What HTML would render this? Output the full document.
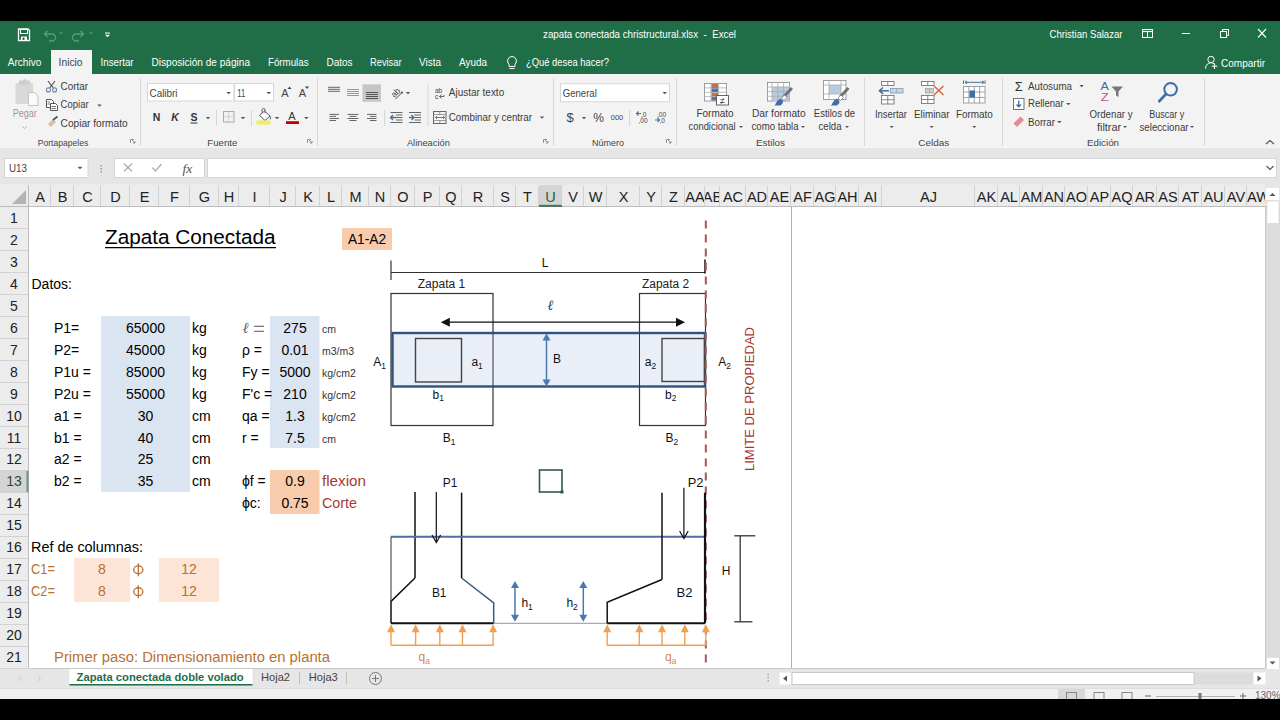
<!DOCTYPE html>
<html><head><meta charset="utf-8"><style>html,body{margin:0;padding:0;background:#000;overflow:hidden;width:1280px;height:720px}svg{display:block}text{font-family:"Liberation Sans",sans-serif}</style></head><body>
<svg width="1280" height="720" viewBox="0 0 1280 720" font-family='"Liberation Sans", sans-serif'><defs><clipPath id="c0"><rect x="29" y="185" width="21" height="21"/></clipPath><clipPath id="c1"><rect x="51" y="185" width="22" height="21"/></clipPath><clipPath id="c2"><rect x="74" y="185" width="26" height="21"/></clipPath><clipPath id="c3"><rect x="101" y="185" width="28" height="21"/></clipPath><clipPath id="c4"><rect x="130" y="185" width="28" height="21"/></clipPath><clipPath id="c5"><rect x="159" y="185" width="30" height="21"/></clipPath><clipPath id="c6"><rect x="190" y="185" width="28" height="21"/></clipPath><clipPath id="c7"><rect x="219" y="185" width="19" height="21"/></clipPath><clipPath id="c8"><rect x="239" y="185" width="30" height="21"/></clipPath><clipPath id="c9"><rect x="270" y="185" width="25" height="21"/></clipPath><clipPath id="c10"><rect x="296" y="185" width="23" height="21"/></clipPath><clipPath id="c11"><rect x="320" y="185" width="21" height="21"/></clipPath><clipPath id="c12"><rect x="342" y="185" width="26" height="21"/></clipPath><clipPath id="c13"><rect x="369" y="185" width="21" height="21"/></clipPath><clipPath id="c14"><rect x="391" y="185" width="23" height="21"/></clipPath><clipPath id="c15"><rect x="415" y="185" width="24" height="21"/></clipPath><clipPath id="c16"><rect x="440" y="185" width="21" height="21"/></clipPath><clipPath id="c17"><rect x="462" y="185" width="31" height="21"/></clipPath><clipPath id="c18"><rect x="494" y="185" width="21" height="21"/></clipPath><clipPath id="c19"><rect x="516" y="185" width="22" height="21"/></clipPath><clipPath id="c20"><rect x="539" y="185" width="22" height="21"/></clipPath><clipPath id="c21"><rect x="562" y="185" width="21" height="21"/></clipPath><clipPath id="c22"><rect x="584" y="185" width="22" height="21"/></clipPath><clipPath id="c23"><rect x="607" y="185" width="32" height="21"/></clipPath><clipPath id="c24"><rect x="640" y="185" width="21" height="21"/></clipPath><clipPath id="c25"><rect x="662" y="185" width="22" height="21"/></clipPath><clipPath id="c26"><rect x="685" y="185" width="19" height="21"/></clipPath><clipPath id="c27"><rect x="705" y="185" width="14" height="21"/></clipPath><clipPath id="c28"><rect x="720" y="185" width="25" height="21"/></clipPath><clipPath id="c29"><rect x="746" y="185" width="21" height="21"/></clipPath><clipPath id="c30"><rect x="768" y="185" width="22" height="21"/></clipPath><clipPath id="c31"><rect x="791" y="185" width="22" height="21"/></clipPath><clipPath id="c32"><rect x="814" y="185" width="21" height="21"/></clipPath><clipPath id="c33"><rect x="836" y="185" width="22" height="21"/></clipPath><clipPath id="c34"><rect x="859" y="185" width="22" height="21"/></clipPath><clipPath id="c35"><rect x="882" y="185" width="92" height="21"/></clipPath><clipPath id="c36"><rect x="975" y="185" width="22" height="21"/></clipPath><clipPath id="c37"><rect x="998" y="185" width="21" height="21"/></clipPath><clipPath id="c38"><rect x="1020" y="185" width="22" height="21"/></clipPath><clipPath id="c39"><rect x="1043" y="185" width="21" height="21"/></clipPath><clipPath id="c40"><rect x="1065" y="185" width="22" height="21"/></clipPath><clipPath id="c41"><rect x="1088" y="185" width="22" height="21"/></clipPath><clipPath id="c42"><rect x="1111" y="185" width="21" height="21"/></clipPath><clipPath id="c43"><rect x="1133" y="185" width="23" height="21"/></clipPath><clipPath id="c44"><rect x="1157" y="185" width="21" height="21"/></clipPath><clipPath id="c45"><rect x="1179" y="185" width="22" height="21"/></clipPath><clipPath id="c46"><rect x="1202" y="185" width="22" height="21"/></clipPath><clipPath id="c47"><rect x="1225" y="185" width="21" height="21"/></clipPath><clipPath id="c48"><rect x="1247" y="185" width="22" height="21"/></clipPath></defs>
<rect x="0" y="0" width="1280" height="720" fill="#000" />
<rect x="0" y="21" width="1280" height="53" fill="#1f6e47" />
<text x="543" y="38" font-size="11" fill="#fff" text-anchor="start" font-weight="normal" textLength="193" lengthAdjust="spacingAndGlyphs" >zapata conectada christructural.xlsx  -  Excel</text>
<text x="1049.5" y="38" font-size="11" fill="#fff" text-anchor="start" font-weight="normal" textLength="73" lengthAdjust="spacingAndGlyphs" >Christian Salazar</text>
<path d="M18.5,29 h9.5 l1.5,1.5 v10 h-11 Z" fill="none" stroke="#fff" stroke-width="1.3" />
<rect x="20.5" y="29.5" width="7" height="4" fill="none" stroke="#fff" stroke-width="1" />
<rect x="21" y="36.5" width="6" height="4" fill="#fff" />
<rect x="22.5" y="37.5" width="2" height="2.5" fill="#1f6e47" />
<path d="M45,34 h7 a3.5,3.5 0 0 1 0,7 h-3" fill="none" stroke="#5f9a78" stroke-width="1.3" />
<path d="M47.5,31 L44.5,34 L47.5,37" fill="none" stroke="#5f9a78" stroke-width="1.3" />
<path d="M59.0,32.5 L63.0,32.5 L61,34.5 Z" fill="#5f9a78" />
<path d="M83,34 h-7 a3.5,3.5 0 0 0 0,7 h3" fill="none" stroke="#5f9a78" stroke-width="1.3" />
<path d="M80.5,31 L83.5,34 L80.5,37" fill="none" stroke="#5f9a78" stroke-width="1.3" />
<path d="M89.0,32.5 L93.0,32.5 L91,34.5 Z" fill="#5f9a78" />
<line x1="105" y1="33" x2="110" y2="33" stroke="#fff" stroke-width="1" />
<path d="M105.0,34.75 L110.0,34.75 L107.5,37.25 Z" fill="#fff" />
<rect x="1142.5" y="29.5" width="10" height="8" fill="none" stroke="#fff" stroke-width="1" />
<line x1="1142.5" y1="31.5" x2="1152.5" y2="31.5" stroke="#fff" stroke-width="1.2" />
<line x1="1147.5" y1="32" x2="1147.5" y2="37.5" stroke="#fff" stroke-width="1" />
<line x1="1182" y1="33.5" x2="1190" y2="33.5" stroke="#fff" stroke-width="1" />
<rect x="1220.5" y="31.5" width="6" height="6" fill="none" stroke="#fff" stroke-width="1" />
<path d="M1222.5,31.5 v-2 h6 v6 h-2" fill="none" stroke="#fff" stroke-width="1" />
<line x1="1258" y1="29" x2="1266" y2="37.5" stroke="#fff" stroke-width="1.1" />
<line x1="1266" y1="29" x2="1258" y2="37.5" stroke="#fff" stroke-width="1.1" />
<rect x="51" y="50" width="41" height="24" fill="#f3f3f3" />
<text x="7.75" y="66" font-size="11" fill="#fff" text-anchor="start" font-weight="normal" textLength="33.5" lengthAdjust="spacingAndGlyphs" >Archivo</text>
<text x="58.6" y="66" font-size="11" fill="#444" text-anchor="start" font-weight="normal" textLength="24" lengthAdjust="spacingAndGlyphs" >Inicio</text>
<text x="100.6" y="66" font-size="11" fill="#fff" text-anchor="start" font-weight="normal" textLength="33" lengthAdjust="spacingAndGlyphs" >Insertar</text>
<text x="151.5" y="66" font-size="11" fill="#fff" text-anchor="start" font-weight="normal" textLength="98.5" lengthAdjust="spacingAndGlyphs" >Disposición de página</text>
<text x="268" y="66" font-size="11" fill="#fff" text-anchor="start" font-weight="normal" textLength="40.5" lengthAdjust="spacingAndGlyphs" >Fórmulas</text>
<text x="326.5" y="66" font-size="11" fill="#fff" text-anchor="start" font-weight="normal" textLength="26" lengthAdjust="spacingAndGlyphs" >Datos</text>
<text x="370" y="66" font-size="11" fill="#fff" text-anchor="start" font-weight="normal" textLength="31.5" lengthAdjust="spacingAndGlyphs" >Revisar</text>
<text x="419" y="66" font-size="11" fill="#fff" text-anchor="start" font-weight="normal" textLength="22" lengthAdjust="spacingAndGlyphs" >Vista</text>
<text x="459" y="66" font-size="11" fill="#fff" text-anchor="start" font-weight="normal" textLength="28" lengthAdjust="spacingAndGlyphs" >Ayuda</text>
<text x="526" y="66" font-size="11" fill="#fff" text-anchor="start" font-weight="normal" textLength="83" lengthAdjust="spacingAndGlyphs" >¿Qué desea hacer?</text>
<path d="M512,56.5 a4.5,4.5 0 0 1 3,7.8 v2.2 h-6 v-2.2 a4.5,4.5 0 0 1 3,-7.8 Z" fill="none" stroke="#fff" stroke-width="1" />
<line x1="509.5" y1="68.5" x2="514.5" y2="68.5" stroke="#fff" stroke-width="1" />
<circle cx="1211" cy="59.5" r="3.2" fill="none" stroke="#fff" stroke-width="1"/>
<path d="M1205.5,68.5 a5.5,5.5 0 0 1 9,-4.5" fill="none" stroke="#fff" stroke-width="1" />
<line x1="1214.5" y1="63.5" x2="1214.5" y2="69" stroke="#fff" stroke-width="1.1" />
<line x1="1211.8" y1="66.2" x2="1217.2" y2="66.2" stroke="#fff" stroke-width="1.1" />
<text x="1221" y="67" font-size="11" fill="#fff" text-anchor="start" font-weight="normal" textLength="44" lengthAdjust="spacingAndGlyphs" >Compartir</text>
<rect x="0" y="148" width="1280" height="37" fill="#e6e6e6" />
<rect x="4.5" y="158.5" width="83.5" height="19" fill="#fff" stroke="#d6d6d6" stroke-width="1" />
<text x="9" y="172" font-size="11" fill="#444" text-anchor="start" font-weight="normal" textLength="18" lengthAdjust="spacingAndGlyphs" >U13</text>
<path d="M77.5,166.75 L82.5,166.75 L80,169.25 Z" fill="#555" />
<rect x="100.5" y="165" width="1.5" height="1.5" fill="#999" />
<rect x="100.5" y="168" width="1.5" height="1.5" fill="#999" />
<rect x="100.5" y="171" width="1.5" height="1.5" fill="#999" />
<rect x="114.5" y="158.5" width="90" height="19" fill="#fff" stroke="#d6d6d6" stroke-width="1" />
<line x1="124" y1="163.5" x2="132" y2="171.5" stroke="#aaa" stroke-width="1.1" />
<line x1="132" y1="163.5" x2="124" y2="171.5" stroke="#aaa" stroke-width="1.1" />
<path d="M152.5,167.5 l3,3.5 l6,-7" fill="none" stroke="#aaa" stroke-width="1.2" />
<text x="182.5" y="172.5" font-size="13.5" fill="#555" text-anchor="start" font-weight="normal" font-style="italic" style="font-family:Liberation Serif">fx</text>
<rect x="207.5" y="158.5" width="1069" height="19" fill="#fff" stroke="#d6d6d6" stroke-width="1" />
<path d="M1266.5,166 l3.5,3.5 l3.5,-3.5" fill="none" stroke="#555" stroke-width="1.2" />
<rect x="0" y="668" width="1280" height="20" fill="#e6e6e6" />
<path d="M21.5,676 l-2.5,2.5 l2.5,2.5" fill="none" stroke="#c4c4c4" stroke-width="1" />
<path d="M38,676 l2.5,2.5 l-2.5,2.5" fill="none" stroke="#c4c4c4" stroke-width="1" />
<rect x="69.5" y="668" width="183" height="18" fill="#fff" />
<rect x="69.5" y="684" width="183" height="1.6" fill="#1f6e47" />
<text x="160.1" y="681" font-size="11" fill="#1f6e47" text-anchor="middle" font-weight="bold" textLength="167" lengthAdjust="spacingAndGlyphs" >Zapata conectada doble volado</text>
<text x="261" y="681" font-size="11" fill="#444" text-anchor="start" font-weight="normal" textLength="29" lengthAdjust="spacingAndGlyphs" >Hoja2</text>
<text x="308.75" y="681" font-size="11" fill="#444" text-anchor="start" font-weight="normal" textLength="29" lengthAdjust="spacingAndGlyphs" >Hoja3</text>
<line x1="299.5" y1="672" x2="299.5" y2="684" stroke="#c0c0c0" stroke-width="1" />
<line x1="346.5" y1="672" x2="346.5" y2="684" stroke="#c0c0c0" stroke-width="1" />
<circle cx="375.5" cy="678.5" r="6" fill="none" stroke="#777" stroke-width="1"/>
<line x1="372" y1="678.5" x2="379" y2="678.5" stroke="#777" stroke-width="1" />
<line x1="375.5" y1="675" x2="375.5" y2="682" stroke="#777" stroke-width="1" />
<rect x="767.5" y="674" width="1.5" height="1.5" fill="#aaa" />
<rect x="767.5" y="677" width="1.5" height="1.5" fill="#aaa" />
<rect x="767.5" y="680" width="1.5" height="1.5" fill="#aaa" />
<rect x="779.5" y="672.5" width="486" height="12" fill="#dcdcdc" />
<rect x="779.5" y="672.5" width="12" height="12" fill="#fff" />
<path d="M787,675.5 l-4,3 l4,3 Z" fill="#555" />
<rect x="792" y="672.5" width="402" height="12" fill="#fff" stroke="#c8c8c8" stroke-width="1" />
<rect x="1253.5" y="672.5" width="12" height="12" fill="#fff" />
<path d="M1257.5,675.5 l4,3 l-4,3 Z" fill="#555" />
<rect x="0" y="688" width="1280" height="11" fill="#f0f0f0" />
<line x1="0" y1="688.5" x2="1280" y2="688.5" stroke="#dedede" stroke-width="1" />
<rect x="1058" y="689" width="27" height="10" fill="#d8d8d8" />
<rect x="1066.5" y="692.5" width="10" height="7" fill="none" stroke="#888" stroke-width="1" />
<rect x="1094" y="692.5" width="10" height="7" fill="none" stroke="#888" stroke-width="1" />
<rect x="1122" y="692.5" width="10" height="7" fill="none" stroke="#888" stroke-width="1" />
<line x1="1145" y1="696" x2="1151" y2="696" stroke="#666" stroke-width="1" />
<line x1="1156" y1="696.5" x2="1235" y2="696.5" stroke="#b0b0b0" stroke-width="1" />
<rect x="1198.5" y="693" width="3" height="6" fill="#777" />
<line x1="1240" y1="696" x2="1246" y2="696" stroke="#666" stroke-width="1" />
<line x1="1243" y1="693" x2="1243" y2="699" stroke="#666" stroke-width="1" />
<text x="1255" y="699" font-size="10" fill="#666" text-anchor="start" font-weight="normal" >130%</text>
<rect x="0" y="699" width="1280" height="21" fill="#000" />
<rect x="0" y="74" width="1280" height="74" fill="#f3f3f3" />
<line x1="140.5" y1="78" x2="140.5" y2="146" stroke="#d8d8d8" stroke-width="1" />
<line x1="317.5" y1="78" x2="317.5" y2="146" stroke="#d8d8d8" stroke-width="1" />
<line x1="553.5" y1="78" x2="553.5" y2="146" stroke="#d8d8d8" stroke-width="1" />
<line x1="676.5" y1="78" x2="676.5" y2="146" stroke="#d8d8d8" stroke-width="1" />
<line x1="864.5" y1="78" x2="864.5" y2="146" stroke="#d8d8d8" stroke-width="1" />
<line x1="1002.5" y1="78" x2="1002.5" y2="146" stroke="#d8d8d8" stroke-width="1" />
<line x1="1204.5" y1="78" x2="1204.5" y2="146" stroke="#d8d8d8" stroke-width="1" />
<text x="63" y="146" font-size="9.5" fill="#444" text-anchor="middle" font-weight="normal" textLength="50.5" lengthAdjust="spacingAndGlyphs" >Portapapeles</text>
<text x="222.3" y="146" font-size="9.5" fill="#444" text-anchor="middle" font-weight="normal" textLength="30" lengthAdjust="spacingAndGlyphs" >Fuente</text>
<text x="428.4" y="146" font-size="9.5" fill="#444" text-anchor="middle" font-weight="normal" textLength="43" lengthAdjust="spacingAndGlyphs" >Alineación</text>
<text x="608" y="146" font-size="9.5" fill="#444" text-anchor="middle" font-weight="normal" textLength="32" lengthAdjust="spacingAndGlyphs" >Número</text>
<text x="770.5" y="146" font-size="9.5" fill="#444" text-anchor="middle" font-weight="normal" textLength="29" lengthAdjust="spacingAndGlyphs" >Estilos</text>
<text x="933.8" y="146" font-size="9.5" fill="#444" text-anchor="middle" font-weight="normal" textLength="31" lengthAdjust="spacingAndGlyphs" >Celdas</text>
<text x="1103" y="146" font-size="9.5" fill="#444" text-anchor="middle" font-weight="normal" textLength="32" lengthAdjust="spacingAndGlyphs" >Edición</text>
<path d="M130.5,143 v-3.5 h3.5" fill="none" stroke="#888" stroke-width="0.9" />
<path d="M132,140 l3,3 m-2,0 h2 v-2" fill="none" stroke="#888" stroke-width="0.9" />
<path d="M307.5,143 v-3.5 h3.5" fill="none" stroke="#888" stroke-width="0.9" />
<path d="M309,140 l3,3 m-2,0 h2 v-2" fill="none" stroke="#888" stroke-width="0.9" />
<path d="M543.5,143 v-3.5 h3.5" fill="none" stroke="#888" stroke-width="0.9" />
<path d="M545,140 l3,3 m-2,0 h2 v-2" fill="none" stroke="#888" stroke-width="0.9" />
<path d="M666.5,143 v-3.5 h3.5" fill="none" stroke="#888" stroke-width="0.9" />
<path d="M668,140 l3,3 m-2,0 h2 v-2" fill="none" stroke="#888" stroke-width="0.9" />
<path d="M1266,144 l4,-3.5 l4,3.5" fill="none" stroke="#555" stroke-width="1.2" />
<rect x="15.5" y="83" width="17.5" height="21" fill="#d9d9d9" />
<rect x="19" y="80.5" width="11" height="4.5" fill="#cfcfcf" />
<circle cx="24.5" cy="80.8" r="1.8" fill="#cfcfcf"/>
<path d="M28.5,92.5 h6 l3.5,3.5 v9.5 h-9.5 Z" fill="#fafafa" stroke="#c4c4c4" stroke-width="1" />
<text x="12.7" y="117" font-size="10" fill="#9a9a9a" text-anchor="start" font-weight="normal" textLength="24" lengthAdjust="spacingAndGlyphs" >Pegar</text>
<path d="M22.5,126.5 l2,2 l2,-2" fill="none" stroke="#aaa" stroke-width="0.9" />
<line x1="48" y1="81" x2="53.3" y2="87.8" stroke="#555" stroke-width="1.1" />
<line x1="55" y1="81" x2="49.7" y2="87.8" stroke="#555" stroke-width="1.1" />
<circle cx="48.4" cy="89.9" r="2" fill="none" stroke="#6a8cb0" stroke-width="1.1"/>
<circle cx="54.6" cy="89.9" r="2" fill="none" stroke="#6a8cb0" stroke-width="1.1"/>
<text x="60.6" y="90.3" font-size="10" fill="#3b3b3b" text-anchor="start" font-weight="normal" textLength="27.5" lengthAdjust="spacingAndGlyphs" >Cortar</text>
<path d="M46.5,99.5 h5 l2,2 v6 h-7 Z" fill="#fff" stroke="#555" stroke-width="1" />
<path d="M50.5,103.5 h5 l2,2 v5 h-7 Z" fill="#fff" stroke="#555" stroke-width="1" />
<line x1="47.5" y1="102" x2="50" y2="102" stroke="#555" stroke-width="0.8" />
<line x1="47.5" y1="104" x2="50" y2="104" stroke="#555" stroke-width="0.8" />
<line x1="51.5" y1="106.5" x2="56" y2="106.5" stroke="#555" stroke-width="0.8" />
<line x1="51.5" y1="108.5" x2="56" y2="108.5" stroke="#555" stroke-width="0.8" />
<text x="60.6" y="108.4" font-size="10" fill="#3b3b3b" text-anchor="start" font-weight="normal" textLength="28" lengthAdjust="spacingAndGlyphs" >Copiar</text>
<path d="M97.25,104.375 L101.75,104.375 L99.5,106.625 Z" fill="#555" />
<path d="M48,124 l5,-5 l3,3 l-5,5 Z" fill="#d6c59a" />
<line x1="53" y1="120" x2="57.5" y2="116.5" stroke="#555" stroke-width="1.8" />
<text x="60.6" y="127" font-size="10" fill="#3b3b3b" text-anchor="start" font-weight="normal" textLength="67" lengthAdjust="spacingAndGlyphs" >Copiar formato</text>
<rect x="147.5" y="83.5" width="86.5" height="17.5" fill="#fff" stroke="#d6d6d6" stroke-width="1" />
<text x="149.5" y="96.6" font-size="10" fill="#444" text-anchor="start" font-weight="normal" textLength="28" lengthAdjust="spacingAndGlyphs" >Calibri</text>
<path d="M226.45,91.875 L230.95,91.875 L228.7,94.125 Z" fill="#555" />
<rect x="234.5" y="83.5" width="39" height="17.5" fill="#fff" stroke="#d6d6d6" stroke-width="1" />
<text x="237.3" y="96.6" font-size="10" fill="#444" text-anchor="start" font-weight="normal" textLength="8" lengthAdjust="spacingAndGlyphs" >11</text>
<path d="M266.55,91.875 L271.05,91.875 L268.8,94.125 Z" fill="#555" />
<text x="285" y="96.5" font-size="11" fill="#444" text-anchor="middle" font-weight="normal" >A</text>
<path d="M287.5,89 l2,-2.5 l2,2.5 Z" fill="#444" />
<text x="302.5" y="96.5" font-size="11" fill="#444" text-anchor="middle" font-weight="normal" >A</text>
<path d="M305,86.5 l2,2.5 l2,-2.5 Z" fill="#444" />
<text x="156.5" y="121" font-size="10.5" fill="#333" text-anchor="middle" font-weight="bold" >N</text>
<text x="175" y="121" font-size="10.5" fill="#333" text-anchor="middle" font-weight="bold" font-style="italic" >K</text>
<text x="194" y="120.8" font-size="10.5" fill="#333" text-anchor="middle" font-weight="bold" >S</text>
<line x1="190.5" y1="123" x2="197.5" y2="123" stroke="#333" stroke-width="1" />
<path d="M205.75,116.875 L210.25,116.875 L208,119.125 Z" fill="#555" />
<line x1="216.5" y1="110" x2="216.5" y2="126" stroke="#d6d6d6" stroke-width="1" />
<rect x="223.5" y="111.5" width="10.5" height="10.5" fill="none" stroke="#aaa" stroke-width="1" />
<line x1="228.75" y1="111.5" x2="228.75" y2="122" stroke="#ccc" stroke-width="0.8" />
<line x1="223.5" y1="116.75" x2="234" y2="116.75" stroke="#ccc" stroke-width="0.8" />
<path d="M240.75,116.875 L245.25,116.875 L243,119.125 Z" fill="#555" />
<line x1="251.5" y1="110" x2="251.5" y2="126" stroke="#d6d6d6" stroke-width="1" />
<path d="M259.5,115.5 l5,-4.5 l5.5,5 l-5,4.5 Z" fill="#fff" stroke="#555" stroke-width="1" />
<path d="M262,112.5 v-2.5 a1.5,1.5 0 0 1 3,0 v3" fill="none" stroke="#555" stroke-width="0.9" />
<path d="M270,116 q1.5,2 0,3.5" fill="none" stroke="#4a6f96" stroke-width="1" />
<rect x="256.5" y="120.5" width="14" height="4" fill="#f0ee5a" />
<path d="M274.75,116.875 L279.25,116.875 L277,119.125 Z" fill="#555" />
<text x="292" y="120" font-size="11" fill="#333" text-anchor="middle" font-weight="normal" >A</text>
<rect x="286" y="121.2" width="13" height="2.8" fill="#c00000" />
<path d="M304.15,116.875 L308.65,116.875 L306.4,119.125 Z" fill="#555" />
<line x1="328" y1="87.3" x2="340" y2="87.3" stroke="#666" stroke-width="1" />
<line x1="328" y1="89.3" x2="340" y2="89.3" stroke="#666" stroke-width="1" />
<line x1="328" y1="91.3" x2="340" y2="91.3" stroke="#666" stroke-width="1" />
<line x1="347" y1="89.5" x2="359" y2="89.5" stroke="#999" stroke-width="1" />
<line x1="347" y1="91.5" x2="359" y2="91.5" stroke="#999" stroke-width="1" />
<line x1="347" y1="93.5" x2="359" y2="93.5" stroke="#999" stroke-width="1" />
<line x1="347" y1="95.5" x2="359" y2="95.5" stroke="#999" stroke-width="1" />
<rect x="362.5" y="84.3" width="18.5" height="17.5" fill="#c6c6c6" />
<line x1="366" y1="92.5" x2="378" y2="92.5" stroke="#555" stroke-width="1" />
<line x1="366" y1="94.5" x2="378" y2="94.5" stroke="#555" stroke-width="1" />
<line x1="366" y1="96.5" x2="378" y2="96.5" stroke="#555" stroke-width="1" />
<line x1="366" y1="98.5" x2="378" y2="98.5" stroke="#555" stroke-width="1" />
<text x="395.5" y="95.5" font-size="8.5" fill="#444" text-anchor="middle" font-weight="normal" transform="rotate(-45 395.5 92.5)">ab</text>
<line x1="395.5" y1="99" x2="401.5" y2="93" stroke="#444" stroke-width="1" />
<circle cx="402" cy="92.5" r="1" fill="#444"/>
<path d="M405.75,91.875 L410.25,91.875 L408,94.125 Z" fill="#555" />
<line x1="329.5" y1="114.4" x2="339" y2="114.4" stroke="#666" stroke-width="1" />
<line x1="329.5" y1="116.4" x2="336" y2="116.4" stroke="#666" stroke-width="1" />
<line x1="329.5" y1="118.5" x2="339" y2="118.5" stroke="#666" stroke-width="1" />
<line x1="329.5" y1="120.5" x2="336" y2="120.5" stroke="#666" stroke-width="1" />
<line x1="347.5" y1="114.4" x2="358.5" y2="114.4" stroke="#666" stroke-width="1" />
<line x1="349.5" y1="116.4" x2="356.5" y2="116.4" stroke="#666" stroke-width="1" />
<line x1="347.5" y1="118.5" x2="358.5" y2="118.5" stroke="#666" stroke-width="1" />
<line x1="349.5" y1="120.5" x2="356.5" y2="120.5" stroke="#666" stroke-width="1" />
<line x1="367" y1="114.4" x2="376.5" y2="114.4" stroke="#666" stroke-width="1" />
<line x1="370" y1="116.4" x2="376.5" y2="116.4" stroke="#666" stroke-width="1" />
<line x1="367" y1="118.5" x2="376.5" y2="118.5" stroke="#666" stroke-width="1" />
<line x1="370" y1="120.5" x2="376.5" y2="120.5" stroke="#666" stroke-width="1" />
<line x1="384.5" y1="110" x2="384.5" y2="126" stroke="#d6d6d6" stroke-width="1" />
<line x1="390.5" y1="112.5" x2="402.5" y2="112.5" stroke="#666" stroke-width="1" />
<line x1="390.5" y1="122.5" x2="402.5" y2="122.5" stroke="#666" stroke-width="1" />
<line x1="396" y1="115" x2="402.5" y2="115" stroke="#666" stroke-width="1" />
<line x1="396" y1="117.5" x2="402.5" y2="117.5" stroke="#666" stroke-width="1" />
<line x1="396" y1="120" x2="402.5" y2="120" stroke="#666" stroke-width="1" />
<path d="M391,117.5 h5 M393,115 l-2.5,2.5 l2.5,2.5" fill="none" stroke="#4a6f96" stroke-width="1.3" />
<line x1="409" y1="112.5" x2="421" y2="112.5" stroke="#666" stroke-width="1" />
<line x1="409" y1="122.5" x2="421" y2="122.5" stroke="#666" stroke-width="1" />
<line x1="414.5" y1="115" x2="421" y2="115" stroke="#666" stroke-width="1" />
<line x1="414.5" y1="117.5" x2="421" y2="117.5" stroke="#666" stroke-width="1" />
<line x1="414.5" y1="120" x2="421" y2="120" stroke="#666" stroke-width="1" />
<path d="M409,117.5 h5 M411.5,115 l2.5,2.5 l-2.5,2.5" fill="none" stroke="#4a6f96" stroke-width="1.3" />
<line x1="428" y1="84" x2="428" y2="126" stroke="#d6d6d6" stroke-width="1" />
<text x="435" y="93" font-size="6.5" fill="#444" text-anchor="start" font-weight="normal" >ab</text>
<text x="435" y="98.5" font-size="6.5" fill="#444" text-anchor="start" font-weight="normal" >c</text>
<path d="M444,95 v1.5 h-4.5 M441.5,94.5 l-2,2 l2,2" fill="none" stroke="#444" stroke-width="0.8" />
<text x="448.8" y="96.3" font-size="10" fill="#3b3b3b" text-anchor="start" font-weight="normal" textLength="55.4" lengthAdjust="spacingAndGlyphs" >Ajustar texto</text>
<rect x="433.5" y="111.5" width="12.5" height="12" fill="none" stroke="#666" stroke-width="1" />
<line x1="433.5" y1="114.5" x2="446" y2="114.5" stroke="#888" stroke-width="0.8" />
<line x1="433.5" y1="120.5" x2="446" y2="120.5" stroke="#888" stroke-width="0.8" />
<line x1="439.75" y1="111.5" x2="439.75" y2="114.5" stroke="#888" stroke-width="0.8" />
<line x1="439.75" y1="120.5" x2="439.75" y2="123.5" stroke="#888" stroke-width="0.8" />
<path d="M435.5,117.5 h9 M437,116 l-1.5,1.5 l1.5,1.5 M443,116 l1.5,1.5 l-1.5,1.5" fill="none" stroke="#555" stroke-width="0.8" />
<text x="448.8" y="121.1" font-size="10" fill="#3b3b3b" text-anchor="start" font-weight="normal" textLength="83.2" lengthAdjust="spacingAndGlyphs" >Combinar y centrar</text>
<path d="M539.75,116.375 L544.25,116.375 L542,118.625 Z" fill="#555" />
<rect x="560.5" y="83.7" width="109" height="18" fill="#fff" stroke="#d6d6d6" stroke-width="1" />
<text x="562.8" y="96.5" font-size="10" fill="#444" text-anchor="start" font-weight="normal" textLength="34" lengthAdjust="spacingAndGlyphs" >General</text>
<path d="M662.45,91.875 L666.95,91.875 L664.7,94.125 Z" fill="#555" />
<text x="570" y="122" font-size="13" fill="#444" text-anchor="middle" font-weight="normal" >$</text>
<path d="M581.75,116.875 L586.25,116.875 L584,119.125 Z" fill="#555" />
<text x="598.5" y="122" font-size="12" fill="#444" text-anchor="middle" font-weight="normal" >%</text>
<text x="617" y="120" font-size="7.5" fill="#444" text-anchor="middle" font-weight="normal" >000</text>
<line x1="629.6" y1="110" x2="629.6" y2="126" stroke="#d6d6d6" stroke-width="1" />
<text x="641" y="116.5" font-size="6.5" fill="#444" text-anchor="start" font-weight="normal" >,0</text>
<text x="638.5" y="122.5" font-size="6.5" fill="#444" text-anchor="start" font-weight="normal" >,00</text>
<path d="M636.5,113.5 h4.5 M638.5,111.5 l-2,2 l2,2" fill="none" stroke="#4a6f96" stroke-width="1.1" />
<text x="657" y="116.5" font-size="6.5" fill="#444" text-anchor="start" font-weight="normal" >,00</text>
<text x="659.5" y="122.5" font-size="6.5" fill="#444" text-anchor="start" font-weight="normal" >,0</text>
<path d="M655,120 h4.5 M657.5,118 l2,2 l-2,2" fill="none" stroke="#4a6f96" stroke-width="1.1" />
<rect x="704.5" y="83.5" width="22" height="17.5" fill="#fff" stroke="#888" stroke-width="0.8" />
<line x1="704.5" y1="87.9" x2="726.5" y2="87.9" stroke="#aaa" stroke-width="0.8" />
<line x1="704.5" y1="92.3" x2="726.5" y2="92.3" stroke="#aaa" stroke-width="0.8" />
<line x1="704.5" y1="96.6" x2="726.5" y2="96.6" stroke="#aaa" stroke-width="0.8" />
<line x1="711" y1="83.5" x2="711" y2="101" stroke="#aaa" stroke-width="0.8" />
<line x1="718.5" y1="83.5" x2="718.5" y2="101" stroke="#aaa" stroke-width="0.8" />
<rect x="711.5" y="84" width="6.5" height="4" fill="#c0704a" />
<rect x="711.5" y="88.4" width="6.5" height="3.6" fill="#4a78ae" />
<rect x="711.5" y="92.8" width="6.5" height="3.5" fill="#c0704a" />
<rect x="711.5" y="97" width="6.5" height="3.5" fill="#4a78ae" />
<rect x="716.5" y="95.5" width="12" height="9.5" fill="#fff" stroke="#555" stroke-width="0.9" />
<text x="722.5" y="103.5" font-size="9" fill="#333" text-anchor="middle" font-weight="normal" >≠</text>
<text x="715" y="117.2" font-size="10" fill="#3b3b3b" text-anchor="middle" font-weight="normal" textLength="37" lengthAdjust="spacingAndGlyphs" >Formato</text>
<text x="712" y="130.4" font-size="10" fill="#3b3b3b" text-anchor="middle" font-weight="normal" textLength="47" lengthAdjust="spacingAndGlyphs" >condicional</text>
<path d="M739.0,126.0 L743.0,126.0 L741,128.0 Z" fill="#555" />
<rect x="767.5" y="82.5" width="22" height="18.5" fill="#fff" stroke="#888" stroke-width="0.8" />
<rect x="772" y="87" width="17.5" height="14" fill="#b9cbe0" />
<line x1="767.5" y1="87" x2="789.5" y2="87" stroke="#aaa" stroke-width="0.8" />
<line x1="767.5" y1="91.7" x2="789.5" y2="91.7" stroke="#aaa" stroke-width="0.8" />
<line x1="767.5" y1="96.3" x2="789.5" y2="96.3" stroke="#aaa" stroke-width="0.8" />
<line x1="772" y1="82.5" x2="772" y2="101" stroke="#aaa" stroke-width="0.8" />
<line x1="777.8" y1="82.5" x2="777.8" y2="101" stroke="#aaa" stroke-width="0.8" />
<line x1="783.6" y1="82.5" x2="783.6" y2="101" stroke="#aaa" stroke-width="0.8" />
<line x1="792" y1="88" x2="783.5" y2="97" stroke="#707070" stroke-width="2.8" />
<path d="M784.5,95 l-3,3 l2.5,2.5 l3,-3 Z" fill="#fff" stroke="#707070" stroke-width="0.7" />
<path d="M780.5,98.5 q-3,1 -4.5,4.5 q-1,2.5 -2,2.5 h6 q3,-1 3,-4.5 Z" fill="#3e6ea8" />
<text x="778.75" y="117.2" font-size="10" fill="#3b3b3b" text-anchor="middle" font-weight="normal" textLength="53.7" lengthAdjust="spacingAndGlyphs" >Dar formato</text>
<text x="775" y="130.4" font-size="10" fill="#3b3b3b" text-anchor="middle" font-weight="normal" textLength="47" lengthAdjust="spacingAndGlyphs" >como tabla</text>
<path d="M801.0,126.0 L805.0,126.0 L803,128.0 Z" fill="#555" />
<rect x="823.5" y="80.5" width="22.5" height="19" fill="#fff" stroke="#888" stroke-width="0.8" />
<rect x="829" y="85" width="12" height="9" fill="#b9cbe0" />
<line x1="823.5" y1="85" x2="846" y2="85" stroke="#aaa" stroke-width="0.8" />
<line x1="823.5" y1="94" x2="846" y2="94" stroke="#aaa" stroke-width="0.8" />
<line x1="829" y1="80.5" x2="829" y2="99.5" stroke="#aaa" stroke-width="0.8" />
<line x1="841" y1="80.5" x2="841" y2="99.5" stroke="#aaa" stroke-width="0.8" />
<line x1="848.5" y1="88" x2="840" y2="97" stroke="#707070" stroke-width="2.8" />
<path d="M841,95 l-3,3 l2.5,2.5 l3,-3 Z" fill="#fff" stroke="#707070" stroke-width="0.7" />
<path d="M837,98.5 q-3,1 -4.5,4.5 q-1,2.5 -2,2.5 h6 q3,-1 3,-4.5 Z" fill="#3e6ea8" />
<text x="834.5" y="117.2" font-size="10" fill="#3b3b3b" text-anchor="middle" font-weight="normal" textLength="41.3" lengthAdjust="spacingAndGlyphs" >Estilos de</text>
<text x="830" y="130.4" font-size="10" fill="#3b3b3b" text-anchor="middle" font-weight="normal" textLength="23" lengthAdjust="spacingAndGlyphs" >celda</text>
<path d="M845.0,126.0 L849.0,126.0 L847,128.0 Z" fill="#555" />
<rect x="881.5" y="81.5" width="12.5" height="4" fill="#fff" stroke="#777" stroke-width="0.9" />
<line x1="887.75" y1="81.5" x2="887.75" y2="85.5" stroke="#777" stroke-width="0.9" />
<rect x="890.5" y="88.5" width="12.5" height="4.5" fill="#c9d5e3" stroke="#8da0b8" stroke-width="0.9" />
<line x1="896.75" y1="88.5" x2="896.75" y2="93.0" stroke="#8da0b8" stroke-width="0.9" />
<path d="M879,90.7 h10 M883,87.5 l-3.5,3.2 l3.5,3.2" fill="none" stroke="#4a6f96" stroke-width="1.6" />
<rect x="881.5" y="95.5" width="12.5" height="8.5" fill="#fff" stroke="#777" stroke-width="0.9" />
<line x1="887.75" y1="95.5" x2="887.75" y2="104.0" stroke="#777" stroke-width="0.9" />
<line x1="881.5" y1="99.75" x2="894.0" y2="99.75" stroke="#777" stroke-width="0.9" />
<text x="891" y="117.6" font-size="10" fill="#3b3b3b" text-anchor="middle" font-weight="normal" textLength="32" lengthAdjust="spacingAndGlyphs" >Insertar</text>
<path d="M889.7,126.0 L893.7,126.0 L891.7,128.0 Z" fill="#555" />
<rect x="921.5" y="81.5" width="12.5" height="4" fill="#fff" stroke="#777" stroke-width="0.9" />
<line x1="927.75" y1="81.5" x2="927.75" y2="85.5" stroke="#777" stroke-width="0.9" />
<rect x="925.5" y="88.5" width="8" height="4.5" fill="#ccc" stroke="#aaa" stroke-width="0.9" />
<line x1="929.5" y1="88.5" x2="929.5" y2="93.0" stroke="#aaa" stroke-width="0.9" />
<line x1="934" y1="86" x2="943.5" y2="95" stroke="#cf6a45" stroke-width="1.5" />
<line x1="943.5" y1="86" x2="934" y2="95" stroke="#cf6a45" stroke-width="1.5" />
<rect x="921.5" y="95.5" width="12.5" height="8" fill="#fff" stroke="#777" stroke-width="0.9" />
<line x1="927.75" y1="95.5" x2="927.75" y2="103.5" stroke="#777" stroke-width="0.9" />
<line x1="921.5" y1="99.5" x2="934.0" y2="99.5" stroke="#777" stroke-width="0.9" />
<text x="931.8" y="117.6" font-size="10" fill="#3b3b3b" text-anchor="middle" font-weight="normal" textLength="35.7" lengthAdjust="spacingAndGlyphs" >Eliminar</text>
<path d="M929.6,126.0 L933.6,126.0 L931.6,128.0 Z" fill="#555" />
<line x1="963.5" y1="80.5" x2="963.5" y2="84" stroke="#555" stroke-width="0.9" />
<line x1="985" y1="80.5" x2="985" y2="84" stroke="#555" stroke-width="0.9" />
<path d="M965,82.3 h19 M967,80.8 l-2,1.5 l2,1.5 M982,80.8 l2,1.5 l-2,1.5" fill="none" stroke="#4a6f96" stroke-width="1" />
<rect x="963.5" y="86.5" width="21.5" height="16.5" fill="#fff" stroke="#999" stroke-width="0.9" />
<line x1="968.875" y1="86.5" x2="968.875" y2="103.0" stroke="#999" stroke-width="0.9" />
<line x1="974.25" y1="86.5" x2="974.25" y2="103.0" stroke="#999" stroke-width="0.9" />
<line x1="979.625" y1="86.5" x2="979.625" y2="103.0" stroke="#999" stroke-width="0.9" />
<line x1="963.5" y1="92.0" x2="985.0" y2="92.0" stroke="#999" stroke-width="0.9" />
<line x1="963.5" y1="97.5" x2="985.0" y2="97.5" stroke="#999" stroke-width="0.9" />
<rect x="969.5" y="90.5" width="5.5" height="7" fill="#3e6ea8" />
<text x="974.4" y="117.6" font-size="10" fill="#3b3b3b" text-anchor="middle" font-weight="normal" textLength="37" lengthAdjust="spacingAndGlyphs" >Formato</text>
<path d="M972.3,126.0 L976.3,126.0 L974.3,128.0 Z" fill="#555" />
<text x="1018.7" y="90.8" font-size="13" fill="#333" text-anchor="middle" font-weight="normal" >Σ</text>
<text x="1028" y="89.75" font-size="10" fill="#3b3b3b" text-anchor="start" font-weight="normal" textLength="44" lengthAdjust="spacingAndGlyphs" >Autosuma</text>
<path d="M1079.35,84.875 L1083.85,84.875 L1081.6,87.125 Z" fill="#555" />
<rect x="1013.5" y="98.5" width="10.5" height="11" fill="#fff" stroke="#666" stroke-width="0.9" />
<path d="M1018.75,100.5 v6 M1016.5,104.5 l2.25,2.25 l2.25,-2.25" fill="none" stroke="#3e6ea8" stroke-width="1.3" />
<text x="1028" y="107.25" font-size="10" fill="#3b3b3b" text-anchor="start" font-weight="normal" textLength="35.6" lengthAdjust="spacingAndGlyphs" >Rellenar</text>
<path d="M1066.05,102.875 L1070.55,102.875 L1068.3,105.125 Z" fill="#555" />
<path d="M1013.5,123.5 l7,-7 l3.5,3.5 l-7,7 Z" fill="#e58a95" />
<text x="1028" y="125.7" font-size="10" fill="#3b3b3b" text-anchor="start" font-weight="normal" textLength="27" lengthAdjust="spacingAndGlyphs" >Borrar</text>
<path d="M1057.15,120.875 L1061.65,120.875 L1059.4,123.125 Z" fill="#555" />
<text x="1104.75" y="90" font-size="11.5" fill="#3e6ea8" text-anchor="middle" font-weight="normal" textLength="8.3" lengthAdjust="spacingAndGlyphs" >A</text>
<text x="1104.75" y="101.3" font-size="11.5" fill="#b05ca0" text-anchor="middle" font-weight="normal" textLength="8" lengthAdjust="spacingAndGlyphs" >Z</text>
<path d="M1111.5,86.5 h11.5 l-4.5,5 v5.5 l-2.5,-1.5 v-4 Z" fill="#777" />
<text x="1111" y="117.9" font-size="10" fill="#3b3b3b" text-anchor="middle" font-weight="normal" textLength="43" lengthAdjust="spacingAndGlyphs" >Ordenar y</text>
<text x="1109" y="130.7" font-size="10" fill="#3b3b3b" text-anchor="middle" font-weight="normal" textLength="24" lengthAdjust="spacingAndGlyphs" >filtrar</text>
<path d="M1123.0,126.0 L1127.0,126.0 L1125,128.0 Z" fill="#555" />
<circle cx="1170.6" cy="89.3" r="6.3" fill="none" stroke="#3e6ea8" stroke-width="2"/>
<line x1="1166" y1="94" x2="1158.5" y2="102" stroke="#3e6ea8" stroke-width="2.6" />
<text x="1166.75" y="117.9" font-size="10" fill="#3b3b3b" text-anchor="middle" font-weight="normal" textLength="35" lengthAdjust="spacingAndGlyphs" >Buscar y</text>
<text x="1164" y="130.7" font-size="10" fill="#3b3b3b" text-anchor="middle" font-weight="normal" textLength="49" lengthAdjust="spacingAndGlyphs" >seleccionar</text>
<path d="M1190.0,126.0 L1194.0,126.0 L1192,128.0 Z" fill="#555" />
<rect x="0" y="184.5" width="1265" height="22" fill="#ececec" />
<rect x="0" y="206" width="29" height="462" fill="#ececec" />
<path d="M26,190 L26,204 L12,204 Z" fill="#b4b4b4" />
<line x1="50.5" y1="186" x2="50.5" y2="206" stroke="#d2d2d2" stroke-width="1" />
<line x1="73.5" y1="186" x2="73.5" y2="206" stroke="#d2d2d2" stroke-width="1" />
<line x1="100.5" y1="186" x2="100.5" y2="206" stroke="#d2d2d2" stroke-width="1" />
<line x1="129.5" y1="186" x2="129.5" y2="206" stroke="#d2d2d2" stroke-width="1" />
<line x1="158.5" y1="186" x2="158.5" y2="206" stroke="#d2d2d2" stroke-width="1" />
<line x1="189.5" y1="186" x2="189.5" y2="206" stroke="#d2d2d2" stroke-width="1" />
<line x1="218.5" y1="186" x2="218.5" y2="206" stroke="#d2d2d2" stroke-width="1" />
<line x1="238.5" y1="186" x2="238.5" y2="206" stroke="#d2d2d2" stroke-width="1" />
<line x1="269.5" y1="186" x2="269.5" y2="206" stroke="#d2d2d2" stroke-width="1" />
<line x1="295.5" y1="186" x2="295.5" y2="206" stroke="#d2d2d2" stroke-width="1" />
<line x1="319.5" y1="186" x2="319.5" y2="206" stroke="#d2d2d2" stroke-width="1" />
<line x1="341.5" y1="186" x2="341.5" y2="206" stroke="#d2d2d2" stroke-width="1" />
<line x1="368.5" y1="186" x2="368.5" y2="206" stroke="#d2d2d2" stroke-width="1" />
<line x1="390.5" y1="186" x2="390.5" y2="206" stroke="#d2d2d2" stroke-width="1" />
<line x1="414.5" y1="186" x2="414.5" y2="206" stroke="#d2d2d2" stroke-width="1" />
<line x1="439.5" y1="186" x2="439.5" y2="206" stroke="#d2d2d2" stroke-width="1" />
<line x1="461.5" y1="186" x2="461.5" y2="206" stroke="#d2d2d2" stroke-width="1" />
<line x1="493.5" y1="186" x2="493.5" y2="206" stroke="#d2d2d2" stroke-width="1" />
<line x1="515.5" y1="186" x2="515.5" y2="206" stroke="#d2d2d2" stroke-width="1" />
<line x1="538.5" y1="186" x2="538.5" y2="206" stroke="#d2d2d2" stroke-width="1" />
<rect x="539" y="185" width="23" height="21" fill="#d4d4d4" />
<rect x="539" y="204.8" width="23" height="2" fill="#4d7562" />
<line x1="561.5" y1="186" x2="561.5" y2="206" stroke="#d2d2d2" stroke-width="1" />
<line x1="583.5" y1="186" x2="583.5" y2="206" stroke="#d2d2d2" stroke-width="1" />
<line x1="606.5" y1="186" x2="606.5" y2="206" stroke="#d2d2d2" stroke-width="1" />
<line x1="639.5" y1="186" x2="639.5" y2="206" stroke="#d2d2d2" stroke-width="1" />
<line x1="661.5" y1="186" x2="661.5" y2="206" stroke="#d2d2d2" stroke-width="1" />
<line x1="684.5" y1="186" x2="684.5" y2="206" stroke="#d2d2d2" stroke-width="1" />
<line x1="704.5" y1="186" x2="704.5" y2="206" stroke="#d2d2d2" stroke-width="1" />
<line x1="719.5" y1="186" x2="719.5" y2="206" stroke="#d2d2d2" stroke-width="1" />
<line x1="745.5" y1="186" x2="745.5" y2="206" stroke="#d2d2d2" stroke-width="1" />
<line x1="767.5" y1="186" x2="767.5" y2="206" stroke="#d2d2d2" stroke-width="1" />
<line x1="790.5" y1="186" x2="790.5" y2="206" stroke="#d2d2d2" stroke-width="1" />
<line x1="813.5" y1="186" x2="813.5" y2="206" stroke="#d2d2d2" stroke-width="1" />
<line x1="835.5" y1="186" x2="835.5" y2="206" stroke="#d2d2d2" stroke-width="1" />
<line x1="858.5" y1="186" x2="858.5" y2="206" stroke="#d2d2d2" stroke-width="1" />
<line x1="881.5" y1="186" x2="881.5" y2="206" stroke="#d2d2d2" stroke-width="1" />
<line x1="974.5" y1="186" x2="974.5" y2="206" stroke="#d2d2d2" stroke-width="1" />
<line x1="997.5" y1="186" x2="997.5" y2="206" stroke="#d2d2d2" stroke-width="1" />
<line x1="1019.5" y1="186" x2="1019.5" y2="206" stroke="#d2d2d2" stroke-width="1" />
<line x1="1042.5" y1="186" x2="1042.5" y2="206" stroke="#d2d2d2" stroke-width="1" />
<line x1="1064.5" y1="186" x2="1064.5" y2="206" stroke="#d2d2d2" stroke-width="1" />
<line x1="1087.5" y1="186" x2="1087.5" y2="206" stroke="#d2d2d2" stroke-width="1" />
<line x1="1110.5" y1="186" x2="1110.5" y2="206" stroke="#d2d2d2" stroke-width="1" />
<line x1="1132.5" y1="186" x2="1132.5" y2="206" stroke="#d2d2d2" stroke-width="1" />
<line x1="1156.5" y1="186" x2="1156.5" y2="206" stroke="#d2d2d2" stroke-width="1" />
<line x1="1178.5" y1="186" x2="1178.5" y2="206" stroke="#d2d2d2" stroke-width="1" />
<line x1="1201.5" y1="186" x2="1201.5" y2="206" stroke="#d2d2d2" stroke-width="1" />
<line x1="1224.5" y1="186" x2="1224.5" y2="206" stroke="#d2d2d2" stroke-width="1" />
<line x1="1246.5" y1="186" x2="1246.5" y2="206" stroke="#d2d2d2" stroke-width="1" />
<text x="40.0" y="202" font-size="14.5" fill="#222" text-anchor="middle" font-weight="normal" clip-path="url(#c0)">A</text>
<text x="62.5" y="202" font-size="14.5" fill="#222" text-anchor="middle" font-weight="normal" clip-path="url(#c1)">B</text>
<text x="87.5" y="202" font-size="14.5" fill="#222" text-anchor="middle" font-weight="normal" clip-path="url(#c2)">C</text>
<text x="115.5" y="202" font-size="14.5" fill="#222" text-anchor="middle" font-weight="normal" clip-path="url(#c3)">D</text>
<text x="144.5" y="202" font-size="14.5" fill="#222" text-anchor="middle" font-weight="normal" clip-path="url(#c4)">E</text>
<text x="174.5" y="202" font-size="14.5" fill="#222" text-anchor="middle" font-weight="normal" clip-path="url(#c5)">F</text>
<text x="204.5" y="202" font-size="14.5" fill="#222" text-anchor="middle" font-weight="normal" clip-path="url(#c6)">G</text>
<text x="229.0" y="202" font-size="14.5" fill="#222" text-anchor="middle" font-weight="normal" clip-path="url(#c7)">H</text>
<text x="254.5" y="202" font-size="14.5" fill="#222" text-anchor="middle" font-weight="normal" clip-path="url(#c8)">I</text>
<text x="283.0" y="202" font-size="14.5" fill="#222" text-anchor="middle" font-weight="normal" clip-path="url(#c9)">J</text>
<text x="308.0" y="202" font-size="14.5" fill="#222" text-anchor="middle" font-weight="normal" clip-path="url(#c10)">K</text>
<text x="331.0" y="202" font-size="14.5" fill="#222" text-anchor="middle" font-weight="normal" clip-path="url(#c11)">L</text>
<text x="355.5" y="202" font-size="14.5" fill="#222" text-anchor="middle" font-weight="normal" clip-path="url(#c12)">M</text>
<text x="380.0" y="202" font-size="14.5" fill="#222" text-anchor="middle" font-weight="normal" clip-path="url(#c13)">N</text>
<text x="403.0" y="202" font-size="14.5" fill="#222" text-anchor="middle" font-weight="normal" clip-path="url(#c14)">O</text>
<text x="427.5" y="202" font-size="14.5" fill="#222" text-anchor="middle" font-weight="normal" clip-path="url(#c15)">P</text>
<text x="451.0" y="202" font-size="14.5" fill="#222" text-anchor="middle" font-weight="normal" clip-path="url(#c16)">Q</text>
<text x="478.0" y="202" font-size="14.5" fill="#222" text-anchor="middle" font-weight="normal" clip-path="url(#c17)">R</text>
<text x="505.0" y="202" font-size="14.5" fill="#222" text-anchor="middle" font-weight="normal" clip-path="url(#c18)">S</text>
<text x="527.5" y="202" font-size="14.5" fill="#222" text-anchor="middle" font-weight="normal" clip-path="url(#c19)">T</text>
<text x="550.5" y="202" font-size="14.5" fill="#1e5c3e" text-anchor="middle" font-weight="normal" clip-path="url(#c20)">U</text>
<text x="573.0" y="202" font-size="14.5" fill="#222" text-anchor="middle" font-weight="normal" clip-path="url(#c21)">V</text>
<text x="595.5" y="202" font-size="14.5" fill="#222" text-anchor="middle" font-weight="normal" clip-path="url(#c22)">W</text>
<text x="623.5" y="202" font-size="14.5" fill="#222" text-anchor="middle" font-weight="normal" clip-path="url(#c23)">X</text>
<text x="651.0" y="202" font-size="14.5" fill="#222" text-anchor="middle" font-weight="normal" clip-path="url(#c24)">Y</text>
<text x="673.5" y="202" font-size="14.5" fill="#222" text-anchor="middle" font-weight="normal" clip-path="url(#c25)">Z</text>
<text x="695.0" y="202" font-size="14.5" fill="#222" text-anchor="middle" font-weight="normal" clip-path="url(#c26)">AA</text>
<text x="712.5" y="202" font-size="14.5" fill="#222" text-anchor="middle" font-weight="normal" clip-path="url(#c27)">AB</text>
<text x="733.0" y="202" font-size="14.5" fill="#222" text-anchor="middle" font-weight="normal" clip-path="url(#c28)">AC</text>
<text x="757.0" y="202" font-size="14.5" fill="#222" text-anchor="middle" font-weight="normal" clip-path="url(#c29)">AD</text>
<text x="779.5" y="202" font-size="14.5" fill="#222" text-anchor="middle" font-weight="normal" clip-path="url(#c30)">AE</text>
<text x="802.5" y="202" font-size="14.5" fill="#222" text-anchor="middle" font-weight="normal" clip-path="url(#c31)">AF</text>
<text x="825.0" y="202" font-size="14.5" fill="#222" text-anchor="middle" font-weight="normal" clip-path="url(#c32)">AG</text>
<text x="847.5" y="202" font-size="14.5" fill="#222" text-anchor="middle" font-weight="normal" clip-path="url(#c33)">AH</text>
<text x="870.5" y="202" font-size="14.5" fill="#222" text-anchor="middle" font-weight="normal" clip-path="url(#c34)">AI</text>
<text x="928.5" y="202" font-size="14.5" fill="#222" text-anchor="middle" font-weight="normal" clip-path="url(#c35)">AJ</text>
<text x="986.5" y="202" font-size="14.5" fill="#222" text-anchor="middle" font-weight="normal" clip-path="url(#c36)">AK</text>
<text x="1009.0" y="202" font-size="14.5" fill="#222" text-anchor="middle" font-weight="normal" clip-path="url(#c37)">AL</text>
<text x="1031.5" y="202" font-size="14.5" fill="#222" text-anchor="middle" font-weight="normal" clip-path="url(#c38)">AM</text>
<text x="1054.0" y="202" font-size="14.5" fill="#222" text-anchor="middle" font-weight="normal" clip-path="url(#c39)">AN</text>
<text x="1076.5" y="202" font-size="14.5" fill="#222" text-anchor="middle" font-weight="normal" clip-path="url(#c40)">AO</text>
<text x="1099.5" y="202" font-size="14.5" fill="#222" text-anchor="middle" font-weight="normal" clip-path="url(#c41)">AP</text>
<text x="1122.0" y="202" font-size="14.5" fill="#222" text-anchor="middle" font-weight="normal" clip-path="url(#c42)">AQ</text>
<text x="1145.0" y="202" font-size="14.5" fill="#222" text-anchor="middle" font-weight="normal" clip-path="url(#c43)">AR</text>
<text x="1168.0" y="202" font-size="14.5" fill="#222" text-anchor="middle" font-weight="normal" clip-path="url(#c44)">AS</text>
<text x="1190.5" y="202" font-size="14.5" fill="#222" text-anchor="middle" font-weight="normal" clip-path="url(#c45)">AT</text>
<text x="1213.5" y="202" font-size="14.5" fill="#222" text-anchor="middle" font-weight="normal" clip-path="url(#c46)">AU</text>
<text x="1236.0" y="202" font-size="14.5" fill="#222" text-anchor="middle" font-weight="normal" clip-path="url(#c47)">AV</text>
<text x="1258.5" y="202" font-size="14.5" fill="#222" text-anchor="middle" font-weight="normal" clip-path="url(#c48)">AW</text>
<line x1="0" y1="206.5" x2="1265" y2="206.5" stroke="#bdbdbd" stroke-width="1" />
<rect x="539" y="205" width="23" height="2" fill="#4d7562" />
<line x1="28.5" y1="185" x2="28.5" y2="668" stroke="#bdbdbd" stroke-width="1" />
<line x1="0" y1="228.5" x2="28" y2="228.5" stroke="#d2d2d2" stroke-width="1" />
<text x="14" y="223.3" font-size="14" fill="#222" text-anchor="middle" font-weight="normal" >1</text>
<line x1="0" y1="250.5" x2="28" y2="250.5" stroke="#d2d2d2" stroke-width="1" />
<text x="14" y="245.22" font-size="14" fill="#222" text-anchor="middle" font-weight="normal" >2</text>
<line x1="0" y1="272.5" x2="28" y2="272.5" stroke="#d2d2d2" stroke-width="1" />
<text x="14" y="267.14" font-size="14" fill="#222" text-anchor="middle" font-weight="normal" >3</text>
<line x1="0" y1="294.5" x2="28" y2="294.5" stroke="#d2d2d2" stroke-width="1" />
<text x="14" y="289.06" font-size="14" fill="#222" text-anchor="middle" font-weight="normal" >4</text>
<line x1="0" y1="316.5" x2="28" y2="316.5" stroke="#d2d2d2" stroke-width="1" />
<text x="14" y="310.98" font-size="14" fill="#222" text-anchor="middle" font-weight="normal" >5</text>
<line x1="0" y1="338.5" x2="28" y2="338.5" stroke="#d2d2d2" stroke-width="1" />
<text x="14" y="332.90000000000003" font-size="14" fill="#222" text-anchor="middle" font-weight="normal" >6</text>
<line x1="0" y1="360.5" x2="28" y2="360.5" stroke="#d2d2d2" stroke-width="1" />
<text x="14" y="354.82" font-size="14" fill="#222" text-anchor="middle" font-weight="normal" >7</text>
<line x1="0" y1="382.5" x2="28" y2="382.5" stroke="#d2d2d2" stroke-width="1" />
<text x="14" y="376.74" font-size="14" fill="#222" text-anchor="middle" font-weight="normal" >8</text>
<line x1="0" y1="404.5" x2="28" y2="404.5" stroke="#d2d2d2" stroke-width="1" />
<text x="14" y="398.66" font-size="14" fill="#222" text-anchor="middle" font-weight="normal" >9</text>
<line x1="0" y1="426.5" x2="28" y2="426.5" stroke="#d2d2d2" stroke-width="1" />
<text x="14" y="420.58" font-size="14" fill="#222" text-anchor="middle" font-weight="normal" >10</text>
<line x1="0" y1="448.5" x2="28" y2="448.5" stroke="#d2d2d2" stroke-width="1" />
<text x="14" y="442.5" font-size="14" fill="#222" text-anchor="middle" font-weight="normal" >11</text>
<line x1="0" y1="470.5" x2="28" y2="470.5" stroke="#d2d2d2" stroke-width="1" />
<text x="14" y="464.42" font-size="14" fill="#222" text-anchor="middle" font-weight="normal" >12</text>
<rect x="0" y="471" width="28" height="22" fill="#d4d4d4" />
<rect x="26.5" y="471" width="2" height="22" fill="#6f9482" />
<line x1="0" y1="492.5" x2="28" y2="492.5" stroke="#d2d2d2" stroke-width="1" />
<text x="14" y="486.34000000000003" font-size="14" fill="#2a4a3a" text-anchor="middle" font-weight="normal" >13</text>
<line x1="0" y1="514.5" x2="28" y2="514.5" stroke="#d2d2d2" stroke-width="1" />
<text x="14" y="508.26" font-size="14" fill="#222" text-anchor="middle" font-weight="normal" >14</text>
<line x1="0" y1="536.5" x2="28" y2="536.5" stroke="#d2d2d2" stroke-width="1" />
<text x="14" y="530.18" font-size="14" fill="#222" text-anchor="middle" font-weight="normal" >15</text>
<line x1="0" y1="558.5" x2="28" y2="558.5" stroke="#d2d2d2" stroke-width="1" />
<text x="14" y="552.0999999999999" font-size="14" fill="#222" text-anchor="middle" font-weight="normal" >16</text>
<line x1="0" y1="580.5" x2="28" y2="580.5" stroke="#d2d2d2" stroke-width="1" />
<text x="14" y="574.02" font-size="14" fill="#222" text-anchor="middle" font-weight="normal" >17</text>
<line x1="0" y1="602.5" x2="28" y2="602.5" stroke="#d2d2d2" stroke-width="1" />
<text x="14" y="595.9399999999999" font-size="14" fill="#222" text-anchor="middle" font-weight="normal" >18</text>
<line x1="0" y1="624.5" x2="28" y2="624.5" stroke="#d2d2d2" stroke-width="1" />
<text x="14" y="617.8599999999999" font-size="14" fill="#222" text-anchor="middle" font-weight="normal" >19</text>
<line x1="0" y1="646.5" x2="28" y2="646.5" stroke="#d2d2d2" stroke-width="1" />
<text x="14" y="639.78" font-size="14" fill="#222" text-anchor="middle" font-weight="normal" >20</text>
<line x1="0" y1="668.5" x2="28" y2="668.5" stroke="#d2d2d2" stroke-width="1" />
<text x="14" y="661.6999999999999" font-size="14" fill="#222" text-anchor="middle" font-weight="normal" >21</text>
<rect x="29" y="207" width="1236" height="461" fill="#fff" />
<line x1="29" y1="668.5" x2="1265" y2="668.5" stroke="#c8c8c8" stroke-width="1" />
<line x1="1265.5" y1="206" x2="1265.5" y2="668" stroke="#c8c8c8" stroke-width="1" />
<rect x="1265" y="185" width="15" height="21" fill="#e6e6e6" />
<rect x="1266" y="206" width="14" height="462" fill="#dcdcdc" />
<rect x="1266" y="188" width="13" height="12" fill="#fff" />
<path d="M1269.5,196 l3,-3 l3,3 Z" fill="#555" />
<rect x="1267" y="201" width="12" height="22.5" fill="#fff" stroke="#d0d0d0" stroke-width="0.6" />
<rect x="1267" y="657.8" width="12" height="11.3" fill="#fff" />
<path d="M1269.5,661.5 l3,3 l3,-3 Z" fill="#555" />
<rect x="101" y="316" width="89" height="176" fill="#dbe4f1" />
<rect x="270" y="316" width="49.5" height="132" fill="#dbe4f1" />
<rect x="270" y="470" width="49.5" height="44" fill="#f8cbad" />
<rect x="342" y="228" width="50" height="22" fill="#f8cbad" />
<rect x="74" y="558" width="56" height="44" fill="#fce4d6" />
<rect x="159" y="558" width="60" height="44" fill="#fce4d6" />
<text x="105" y="244" font-size="20.5" fill="#000" text-anchor="start" font-weight="normal" textLength="170.6" lengthAdjust="spacingAndGlyphs" >Zapata Conectada</text>
<line x1="105" y1="247.6" x2="276" y2="247.6" stroke="#000" stroke-width="1.3" />
<text x="367" y="244" font-size="14" fill="#000" text-anchor="middle" font-weight="normal" textLength="38" lengthAdjust="spacingAndGlyphs" >A1-A2</text>
<text x="31.5" y="289.06" font-size="14" fill="#000" text-anchor="start" font-weight="normal" textLength="40.5" lengthAdjust="spacingAndGlyphs" >Datos:</text>
<text x="54" y="332.90000000000003" font-size="14" fill="#000" text-anchor="start" font-weight="normal" >P1=</text>
<text x="145.5" y="332.90000000000003" font-size="14" fill="#000" text-anchor="middle" font-weight="normal" >65000</text>
<text x="192" y="332.90000000000003" font-size="14" fill="#000" text-anchor="start" font-weight="normal" >kg</text>
<text x="54" y="354.82" font-size="14" fill="#000" text-anchor="start" font-weight="normal" >P2=</text>
<text x="145.5" y="354.82" font-size="14" fill="#000" text-anchor="middle" font-weight="normal" >45000</text>
<text x="192" y="354.82" font-size="14" fill="#000" text-anchor="start" font-weight="normal" >kg</text>
<text x="54" y="376.74" font-size="14" fill="#000" text-anchor="start" font-weight="normal" >P1u =</text>
<text x="145.5" y="376.74" font-size="14" fill="#000" text-anchor="middle" font-weight="normal" >85000</text>
<text x="192" y="376.74" font-size="14" fill="#000" text-anchor="start" font-weight="normal" >kg</text>
<text x="54" y="398.66" font-size="14" fill="#000" text-anchor="start" font-weight="normal" >P2u =</text>
<text x="145.5" y="398.66" font-size="14" fill="#000" text-anchor="middle" font-weight="normal" >55000</text>
<text x="192" y="398.66" font-size="14" fill="#000" text-anchor="start" font-weight="normal" >kg</text>
<text x="54" y="420.58" font-size="14" fill="#000" text-anchor="start" font-weight="normal" >a1 =</text>
<text x="145.5" y="420.58" font-size="14" fill="#000" text-anchor="middle" font-weight="normal" >30</text>
<text x="192" y="420.58" font-size="14" fill="#000" text-anchor="start" font-weight="normal" >cm</text>
<text x="54" y="442.5" font-size="14" fill="#000" text-anchor="start" font-weight="normal" >b1 =</text>
<text x="145.5" y="442.5" font-size="14" fill="#000" text-anchor="middle" font-weight="normal" >40</text>
<text x="192" y="442.5" font-size="14" fill="#000" text-anchor="start" font-weight="normal" >cm</text>
<text x="54" y="464.42" font-size="14" fill="#000" text-anchor="start" font-weight="normal" >a2 =</text>
<text x="145.5" y="464.42" font-size="14" fill="#000" text-anchor="middle" font-weight="normal" >25</text>
<text x="192" y="464.42" font-size="14" fill="#000" text-anchor="start" font-weight="normal" >cm</text>
<text x="54" y="486.34000000000003" font-size="14" fill="#000" text-anchor="start" font-weight="normal" >b2 =</text>
<text x="145.5" y="486.34000000000003" font-size="14" fill="#000" text-anchor="middle" font-weight="normal" >35</text>
<text x="192" y="486.34000000000003" font-size="14" fill="#000" text-anchor="start" font-weight="normal" >cm</text>
<text x="242.5" y="332.90000000000003" font-size="15" fill="#606060" text-anchor="start" font-weight="normal" font-style="italic" style="font-family:Liberation Serif">ℓ</text>
<line x1="254" y1="326.3" x2="264" y2="326.3" stroke="#606060" stroke-width="1.1" />
<line x1="254" y1="331.3" x2="264" y2="331.3" stroke="#606060" stroke-width="1.1" />
<text x="295" y="332.90000000000003" font-size="14" fill="#000" text-anchor="middle" font-weight="normal" >275</text>
<text x="322" y="332.90000000000003" font-size="10.5" fill="#333" text-anchor="start" font-weight="normal" >cm</text>
<text x="242" y="354.82" font-size="14" fill="#000" text-anchor="start" font-weight="normal" >ρ =</text>
<text x="295" y="354.82" font-size="14" fill="#000" text-anchor="middle" font-weight="normal" >0.01</text>
<text x="322" y="354.82" font-size="10.5" fill="#333" text-anchor="start" font-weight="normal" >m3/m3</text>
<text x="242" y="376.74" font-size="14" fill="#000" text-anchor="start" font-weight="normal" >Fy =</text>
<text x="295" y="376.74" font-size="14" fill="#000" text-anchor="middle" font-weight="normal" >5000</text>
<text x="322" y="376.74" font-size="10.5" fill="#333" text-anchor="start" font-weight="normal" >kg/cm2</text>
<text x="242" y="398.66" font-size="14" fill="#000" text-anchor="start" font-weight="normal" >F'c =</text>
<text x="295" y="398.66" font-size="14" fill="#000" text-anchor="middle" font-weight="normal" >210</text>
<text x="322" y="398.66" font-size="10.5" fill="#333" text-anchor="start" font-weight="normal" >kg/cm2</text>
<text x="242" y="420.58" font-size="14" fill="#000" text-anchor="start" font-weight="normal" >qa =</text>
<text x="295" y="420.58" font-size="14" fill="#000" text-anchor="middle" font-weight="normal" >1.3</text>
<text x="322" y="420.58" font-size="10.5" fill="#333" text-anchor="start" font-weight="normal" >kg/cm2</text>
<text x="242" y="442.5" font-size="14" fill="#000" text-anchor="start" font-weight="normal" >r =</text>
<text x="295" y="442.5" font-size="14" fill="#000" text-anchor="middle" font-weight="normal" >7.5</text>
<text x="322" y="442.5" font-size="10.5" fill="#333" text-anchor="start" font-weight="normal" >cm</text>
<text x="242" y="486.34000000000003" font-size="14" fill="#000" text-anchor="start" font-weight="normal" >ϕf =</text>
<text x="295" y="486.34000000000003" font-size="14" fill="#000" text-anchor="middle" font-weight="normal" >0.9</text>
<text x="322" y="486.34000000000003" font-size="14" fill="#a83a32" text-anchor="start" font-weight="normal" textLength="44" lengthAdjust="spacingAndGlyphs" >flexion</text>
<text x="242" y="508.26" font-size="14" fill="#000" text-anchor="start" font-weight="normal" >ϕc:</text>
<text x="295" y="508.26" font-size="14" fill="#000" text-anchor="middle" font-weight="normal" >0.75</text>
<text x="322" y="508.26" font-size="14" fill="#a83a32" text-anchor="start" font-weight="normal" textLength="35" lengthAdjust="spacingAndGlyphs" >Corte</text>
<text x="31" y="552.0999999999999" font-size="14" fill="#000" text-anchor="start" font-weight="normal" textLength="112" lengthAdjust="spacingAndGlyphs" >Ref de columnas:</text>
<text x="31" y="574.02" font-size="14" fill="#b8712f" text-anchor="start" font-weight="normal" textLength="24" lengthAdjust="spacingAndGlyphs" >C1=</text>
<text x="102" y="574.02" font-size="14" fill="#b8712f" text-anchor="middle" font-weight="normal" >8</text>
<ellipse cx="138.3" cy="569.72" rx="4.6" ry="3.9" fill="none" stroke="#b8712f" stroke-width="1.3"/>
<line x1="138.3" y1="563.22" x2="138.3" y2="576.22" stroke="#b8712f" stroke-width="1.3" />
<text x="189" y="574.02" font-size="14" fill="#b8712f" text-anchor="middle" font-weight="normal" >12</text>
<text x="31" y="595.9399999999999" font-size="14" fill="#b8712f" text-anchor="start" font-weight="normal" textLength="24" lengthAdjust="spacingAndGlyphs" >C2=</text>
<text x="102" y="595.9399999999999" font-size="14" fill="#b8712f" text-anchor="middle" font-weight="normal" >8</text>
<ellipse cx="138.3" cy="591.64" rx="4.6" ry="3.9" fill="none" stroke="#b8712f" stroke-width="1.3"/>
<line x1="138.3" y1="585.14" x2="138.3" y2="598.14" stroke="#b8712f" stroke-width="1.3" />
<text x="189" y="595.9399999999999" font-size="14" fill="#b8712f" text-anchor="middle" font-weight="normal" >12</text>
<text x="54" y="661.6999999999999" font-size="14" fill="#b8712f" text-anchor="start" font-weight="normal" textLength="276" lengthAdjust="spacingAndGlyphs" >Primer paso: Dimensionamiento en planta</text>
<line x1="791.5" y1="206" x2="791.5" y2="668" stroke="#c9a7a7" stroke-width="1" />
<line x1="391" y1="260.5" x2="391" y2="280" stroke="#333" stroke-width="1.2" />
<line x1="391" y1="272.5" x2="705" y2="272.5" stroke="#333" stroke-width="1" />
<line x1="705" y1="259.5" x2="705" y2="273.5" stroke="#111" stroke-width="1.5" />
<text x="545" y="267.2" font-size="12" fill="#111" text-anchor="middle" font-weight="normal" >L</text>
<rect x="391" y="293.5" width="102" height="132" fill="none" stroke="#333" stroke-width="1.2" />
<rect x="639.5" y="293.5" width="66" height="132" fill="none" stroke="#333" stroke-width="1.2" />
<text x="441.5" y="288.3" font-size="12" fill="#222" text-anchor="middle" font-weight="normal" textLength="47.5" lengthAdjust="spacingAndGlyphs" >Zapata 1</text>
<text x="665.6" y="288.3" font-size="12" fill="#222" text-anchor="middle" font-weight="normal" textLength="47.2" lengthAdjust="spacingAndGlyphs" >Zapata 2</text>
<rect x="392.5" y="333" width="312.5" height="53.5" fill="#e9eef7" stroke="#2f5283" stroke-width="2.4" />
<line x1="493" y1="333" x2="493" y2="386.5" stroke="#333" stroke-width="1" />
<line x1="639.5" y1="333" x2="639.5" y2="386.5" stroke="#333" stroke-width="1" />
<rect x="415.5" y="338.5" width="46" height="43.5" fill="none" stroke="#444" stroke-width="1.4" />
<rect x="662" y="338.5" width="42.5" height="43" fill="none" stroke="#444" stroke-width="1.4" />
<line x1="448" y1="322.2" x2="678" y2="322.2" stroke="#111" stroke-width="1.3" />
<path d="M440.8,322.2 l9,-4.5 v9 Z" fill="#111" />
<path d="M685,322.2 l-9,-4.5 v9 Z" fill="#111" />
<text x="550.5" y="309.7" font-size="14" fill="#333" text-anchor="middle" font-weight="normal" font-style="italic" style="font-family:Liberation Serif">ℓ</text>
<line x1="546.5" y1="340" x2="546.5" y2="381" stroke="#4a78b0" stroke-width="1.5" />
<path d="M546.5,333.5 l-4,7 h8 Z" fill="#4a78b0" />
<path d="M546.5,386.5 l-4,-7 h8 Z" fill="#4a78b0" />
<text x="557" y="363.3" font-size="12" fill="#111" text-anchor="middle" font-weight="normal" >B</text>
<text x="373.3" y="366" font-size="12" fill="#111">A<tspan font-size="8.399999999999999" dy="2.5">1</tspan></text>
<text x="471.4" y="366" font-size="12" fill="#111">a<tspan font-size="8.399999999999999" dy="2.5">1</tspan></text>
<text x="432.5" y="398.6" font-size="12" fill="#111">b<tspan font-size="8.399999999999999" dy="2.5">1</tspan></text>
<text x="442.8" y="442.2" font-size="12" fill="#111">B<tspan font-size="8.399999999999999" dy="2.5">1</tspan></text>
<text x="644.7" y="366" font-size="12" fill="#111">a<tspan font-size="8.399999999999999" dy="2.5">2</tspan></text>
<text x="718.3" y="366" font-size="12" fill="#111">A<tspan font-size="8.399999999999999" dy="2.5">2</tspan></text>
<text x="665" y="398.6" font-size="12" fill="#111">b<tspan font-size="8.399999999999999" dy="2.5">2</tspan></text>
<text x="665.5" y="442.2" font-size="12" fill="#111">B<tspan font-size="8.399999999999999" dy="2.5">2</tspan></text>
<line x1="705.8" y1="220.4" x2="705.8" y2="668" stroke="#a45757" stroke-width="2" stroke-dasharray="8,6"/>
<text x="0" y="0" font-size="13" fill="#a8342e" text-anchor="middle" textLength="144" lengthAdjust="spacingAndGlyphs" transform="translate(753.5 399) rotate(-90)">LIMITE DE PROPIEDAD</text>
<line x1="415" y1="492" x2="415" y2="578" stroke="#111" stroke-width="1.5" />
<line x1="461.6" y1="492.7" x2="461.6" y2="578" stroke="#111" stroke-width="1.5" />
<path d="M415,578 L391,601.4 V623.3" fill="none" stroke="#111" stroke-width="1.5" />
<path d="M461.6,578 L493.7,602.9 V623.3" fill="none" stroke="#3c5a80" stroke-width="1.5" />
<line x1="391" y1="623.3" x2="493.7" y2="623.3" stroke="#111" stroke-width="2" />
<line x1="493.7" y1="623.3" x2="607.2" y2="623.3" stroke="#aaa" stroke-width="1.3" />
<line x1="391" y1="536.7" x2="705" y2="536.7" stroke="#4a70a8" stroke-width="2" />
<line x1="391" y1="536.7" x2="391" y2="601.4" stroke="#333" stroke-width="1" />
<line x1="436.3" y1="492" x2="436.3" y2="542" stroke="#111" stroke-width="1.2" />
<path d="M432,535 l4.3,7.5 l4.3,-7.5" fill="none" stroke="#111" stroke-width="1.2" />
<text x="442.7" y="486.8" font-size="12" fill="#111" text-anchor="start" font-weight="normal" textLength="14.6" lengthAdjust="spacingAndGlyphs" >P1</text>
<text x="439.2" y="597" font-size="12" fill="#111" text-anchor="middle" font-weight="normal" textLength="14.6" lengthAdjust="spacingAndGlyphs" >B1</text>
<line x1="662" y1="492.7" x2="662" y2="579.5" stroke="#111" stroke-width="1.5" />
<line x1="705" y1="492.7" x2="705" y2="623.3" stroke="#111" stroke-width="2.2" />
<path d="M662,579.5 L607.2,602.3 V623.3" fill="none" stroke="#111" stroke-width="1.5" />
<line x1="607.2" y1="623.3" x2="705" y2="623.3" stroke="#111" stroke-width="2" />
<line x1="683.9" y1="487.7" x2="683.9" y2="538" stroke="#111" stroke-width="1.2" />
<path d="M679.6,531 l4.3,7.5 l4.3,-7.5" fill="none" stroke="#111" stroke-width="1.2" />
<text x="687.7" y="486.8" font-size="12" fill="#111" text-anchor="start" font-weight="normal" textLength="15.7" lengthAdjust="spacingAndGlyphs" >P2</text>
<text x="684.6" y="597" font-size="12" fill="#111" text-anchor="middle" font-weight="normal" textLength="16" lengthAdjust="spacingAndGlyphs" >B2</text>
<line x1="515" y1="587" x2="515" y2="616" stroke="#4a78b0" stroke-width="1.5" />
<path d="M515,581 l-4,7 h8 Z" fill="#4a78b0" />
<path d="M515,621.8 l-4,-7 h8 Z" fill="#4a78b0" />
<line x1="583.3" y1="587" x2="583.3" y2="616" stroke="#4a78b0" stroke-width="1.5" />
<path d="M583.3,581 l-4,7 h8 Z" fill="#4a78b0" />
<path d="M583.3,621.8 l-4,-7 h8 Z" fill="#4a78b0" />
<text x="521.4" y="607.2" font-size="12" fill="#111">h<tspan font-size="8.399999999999999" dy="2.5">1</tspan></text>
<text x="566.4" y="607.2" font-size="12" fill="#111">h<tspan font-size="8.399999999999999" dy="2.5">2</tspan></text>
<line x1="740.2" y1="535.8" x2="740.2" y2="621.8" stroke="#333" stroke-width="1.3" />
<line x1="734.3" y1="535.8" x2="755.3" y2="535.8" stroke="#333" stroke-width="1.3" />
<line x1="734.3" y1="621.8" x2="752.4" y2="621.8" stroke="#333" stroke-width="1.3" />
<text x="726.2" y="575.2" font-size="12" fill="#111" text-anchor="middle" font-weight="normal" >H</text>
<line x1="391" y1="645.3" x2="493.7" y2="645.3" stroke="#f0a050" stroke-width="1.5" />
<line x1="607.2" y1="645.3" x2="705.8" y2="645.3" stroke="#f0a050" stroke-width="1.5" />
<line x1="391" y1="630" x2="391" y2="645.3" stroke="#f0a050" stroke-width="1.4" />
<path d="M391,624.2 l-4,8 h8 Z" fill="#f0a050" />
<line x1="415.6" y1="630" x2="415.6" y2="645.3" stroke="#f0a050" stroke-width="1.4" />
<path d="M415.6,624.2 l-4,8 h8 Z" fill="#f0a050" />
<line x1="439.8" y1="630" x2="439.8" y2="645.3" stroke="#f0a050" stroke-width="1.4" />
<path d="M439.8,624.2 l-4,8 h8 Z" fill="#f0a050" />
<line x1="462.5" y1="630" x2="462.5" y2="645.3" stroke="#f0a050" stroke-width="1.4" />
<path d="M462.5,624.2 l-4,8 h8 Z" fill="#f0a050" />
<line x1="493.1" y1="630" x2="493.1" y2="645.3" stroke="#f0a050" stroke-width="1.4" />
<path d="M493.1,624.2 l-4,8 h8 Z" fill="#f0a050" />
<line x1="607.2" y1="630" x2="607.2" y2="645.3" stroke="#f0a050" stroke-width="1.4" />
<path d="M607.2,624.2 l-4,8 h8 Z" fill="#f0a050" />
<line x1="639.3" y1="630" x2="639.3" y2="645.3" stroke="#f0a050" stroke-width="1.4" />
<path d="M639.3,624.2 l-4,8 h8 Z" fill="#f0a050" />
<line x1="662" y1="630" x2="662" y2="645.3" stroke="#f0a050" stroke-width="1.4" />
<path d="M662,624.2 l-4,8 h8 Z" fill="#f0a050" />
<line x1="684.8" y1="630" x2="684.8" y2="645.3" stroke="#f0a050" stroke-width="1.4" />
<path d="M684.8,624.2 l-4,8 h8 Z" fill="#f0a050" />
<line x1="705.8" y1="630" x2="705.8" y2="645.3" stroke="#f0a050" stroke-width="1.4" />
<path d="M705.8,624.2 l-4,8 h8 Z" fill="#f0a050" />
<text x="418.5" y="661" font-size="12" fill="#d08a48">q<tspan font-size="8.399999999999999" dy="2.5">a</tspan></text>
<text x="665" y="661" font-size="12" fill="#d08a48">q<tspan font-size="8.399999999999999" dy="2.5">a</tspan></text>
<rect x="539.5" y="470" width="22.5" height="22" fill="none" stroke="#2d5a48" stroke-width="1.6" />
<rect x="560.5" y="490.5" width="3" height="3" fill="#2d5a48" /></svg>
</body></html>
